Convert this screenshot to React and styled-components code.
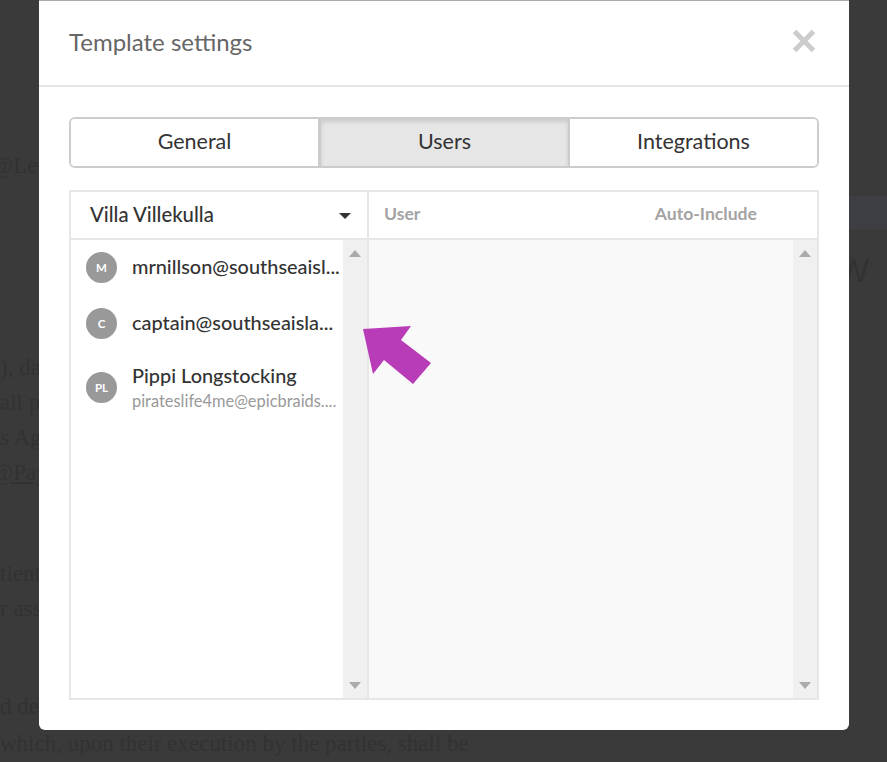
import React from "react";
import styled, { createGlobalStyle } from "styled-components";

const GlobalStyle = createGlobalStyle`
  html, body {
    margin: 0;
    padding: 0;
    height: 100%;
    overflow: hidden;
    background: #3a3a3a;
  }
  * {
    box-sizing: border-box;
  }
`;

const Page = styled.div`
  position: relative;
  width: 887px;
  height: 762px;
  overflow: hidden;
  background: #3a3a3a;
  font-family: "Lato", "Open Sans", sans-serif;
`;

const Document = styled.div`
  display: flex;
  flex-direction: column;
  height: 100%;
  font-family: "Liberation Serif", serif;
  font-size: 23px;
  line-height: 35px;
  color: #323232;
  white-space: nowrap;
`;

const DocLine = styled.div`
  height: 35px;
  margin-top: ${({ gap }) => gap || 0}px;
  margin-left: ${({ indent }) => indent || 0}px;
  text-decoration: ${({ link }) => (link ? "underline" : "none")};
`;

const Band = styled.div`
  position: absolute;
  left: 849px;
  right: 0;
  top: 196px;
  height: 33px;
  background: #3e3e45;
`;

const Heading = styled.div`
  position: absolute;
  left: 838px;
  top: 251px;
  font-family: "Liberation Sans", sans-serif;
  font-size: 33px;
  line-height: 40px;
  color: #323232;
`;

const Modal = styled.div`
  position: absolute;
  left: 39px;
  top: 0;
  width: 810px;
  height: 730px;
  display: flex;
  flex-direction: column;
  background: #fff;
  border-top: 1px solid #aaa;
  border-radius: 0 0 6px 6px;
`;

const ModalHeader = styled.div`
  height: 86px;
  flex: none;
  display: flex;
  align-items: center;
  justify-content: space-between;
  padding: 0 33px 4px 30px;
  border-bottom: 2px solid #e6e6e6;
`;

const Title = styled.h2`
  margin: 0;
  font-size: 24px;
  font-weight: 400;
  color: #666;
`;

const CloseIcon = styled.svg`
  width: 24px;
  height: 24px;
  display: block;
`;

const ModalBody = styled.div`
  flex: 1;
  display: flex;
  flex-direction: column;
  gap: 22px;
  padding: 30px 30px 30px;
`;

const Tabs = styled.div`
  display: flex;
  height: 51px;
  flex: none;
  border: 2px solid #ccc;
  border-radius: 6px;
  overflow: hidden;
`;

const Tab = styled.div`
  flex: 1;
  display: flex;
  align-items: center;
  justify-content: center;
  padding-bottom: 4px;
  font-size: 21.5px;
  color: #333;
  background: ${({ active }) => (active ? "#e6e6e6" : "#fff")};
  border-left: ${({ active }) => (active ? "3px solid #ccc" : "none")};
  border-right: ${({ active }) => (active ? "2px solid #ccc" : "none")};
  box-shadow: ${({ active }) => (active ? "inset 0 3px 4px rgba(0, 0, 0, 0.12)" : "none")};
`;

const Table = styled.div`
  flex: 1;
  display: grid;
  grid-template-columns: 298px 1fr;
  grid-template-rows: 48px 1fr;
  border: 2px solid #e6e6e6;
`;

const AccountCell = styled.div`
  display: flex;
  align-items: center;
  justify-content: space-between;
  padding: 0 16px 3px 19px;
  border-right: 2px solid #e6e6e6;
  border-bottom: 2px solid #e6e6e6;
  font-size: 20.3px;
  font-weight: 500;
  color: #333;
`;

const Caret = styled.span`
  width: 0;
  height: 0;
  margin-top: 5px;
  border-left: 6px solid transparent;
  border-right: 6px solid transparent;
  border-top: 6px solid #333;
`;

const ColumnHeads = styled.div`
  display: flex;
  align-items: center;
  justify-content: space-between;
  padding: 0 60px 3px 15px;
  border-bottom: 2px solid #e6e6e6;
  font-size: 17.6px;
  font-weight: 700;
  color: #a3a3a3;
`;

const UserPane = styled.div`
  display: flex;
  min-height: 0;
  border-right: 2px solid #e6e6e6;
  overflow: hidden;
`;

const UserList = styled.div`
  flex: 1;
  min-width: 0;
  display: flex;
  flex-direction: column;
  gap: 1px;
  padding-left: 15px;
`;

const UserRow = styled.div`
  display: flex;
  align-items: center;
  gap: 15px;
  min-height: ${({ tall }) => (tall ? 71 : 55)}px;
`;

const Avatar = styled.div`
  width: 31px;
  height: 31px;
  flex: none;
  display: flex;
  align-items: center;
  justify-content: center;
  border-radius: 50%;
  background: #999;
  color: #fff;
  font-size: 11.5px;
  font-weight: 700;
`;

const UserText = styled.div`
  flex: 1;
  min-width: 0;
  padding-bottom: ${({ tall }) => (tall ? 0 : 3)}px;
`;

const UserName = styled.div`
  font-size: 19.9px;
  line-height: 25px;
  font-weight: 500;
  color: #333;
  white-space: nowrap;
`;

const UserEmail = styled.div`
  font-size: 16.4px;
  line-height: 25px;
  color: #999;
  white-space: nowrap;
`;

const DetailPane = styled.div`
  display: flex;
  justify-content: flex-end;
  background: #f9f9f9;
  min-height: 0;
`;

const Scrollbar = styled.div`
  width: 24px;
  flex: none;
  display: flex;
  flex-direction: column;
  align-items: center;
  justify-content: space-between;
  padding: 10px 0 9px;
  background: #f0f0f0;
`;

const ArrowUp = styled.span`
  width: 0;
  height: 0;
  border-left: 6px solid transparent;
  border-right: 6px solid transparent;
  border-bottom: 7px solid #aaa;
`;

const ArrowDown = styled.span`
  width: 0;
  height: 0;
  border-left: 6px solid transparent;
  border-right: 6px solid transparent;
  border-top: 7px solid #aaa;
`;

const Pointer = styled.svg`
  position: absolute;
  left: 360px;
  top: 323px;
  width: 74px;
  height: 64px;
`;

const users = [
  { initials: "M", name: "mrnillson@southseaisl..." },
  { initials: "C", name: "captain@southseaisla..." },
  { initials: "PL", name: "Pippi Longstocking", email: "pirateslife4me@epicbraids...." },
];

const docLines = [
  { gap: 148, indent: -8, text: "@Levin" },
  { gap: 167, text: "), dated" },
  { text: "all parties" },
  { text: "s Agreement" },
  { indent: -8, text: "@PaymentTerms", link: true },
  { gap: 66, text: "tient" },
  { text: "r assign" },
  { gap: 63, text: "d delivered" },
  { gap: 2, text: "which, upon their execution by the parties, shall be" },
];

const Scroller = () => (
  <Scrollbar>
    <ArrowUp />
    <ArrowDown />
  </Scrollbar>
);

export default function App() {
  return (
    <Page>
      <GlobalStyle />
      <Document>
        {docLines.map((line) => (
          <DocLine key={line.text} gap={line.gap} indent={line.indent} link={line.link}>
            {line.text}
          </DocLine>
        ))}
      </Document>
      <Band />
      <Heading>W</Heading>
      <Modal>
        <ModalHeader>
          <Title>Template settings</Title>
          <CloseIcon viewBox="0 0 24 24">
            <path d="M2.5 2.5 L21.5 21.5 M21.5 2.5 L2.5 21.5" stroke="#ccc" strokeWidth="5" fill="none" />
          </CloseIcon>
        </ModalHeader>
        <ModalBody>
          <Tabs>
            <Tab>General</Tab>
            <Tab active>Users</Tab>
            <Tab>Integrations</Tab>
          </Tabs>
          <Table>
            <AccountCell>
              Villa Villekulla
              <Caret />
            </AccountCell>
            <ColumnHeads>
              <span>User</span>
              <span>Auto-Include</span>
            </ColumnHeads>
            <UserPane>
              <UserList>
                {users.map((user) => (
                  <UserRow key={user.initials} tall={!!user.email}>
                    <Avatar>{user.initials}</Avatar>
                    <UserText tall={!!user.email}>
                      <UserName>{user.name}</UserName>
                      {user.email && <UserEmail>{user.email}</UserEmail>}
                    </UserText>
                  </UserRow>
                ))}
              </UserList>
              <Scroller />
            </UserPane>
            <DetailPane>
              <Scroller />
            </DetailPane>
          </Table>
        </ModalBody>
      </Modal>
      <Pointer viewBox="0 0 74 64">
        <path d="M3 6 L51 3 L41 17 L71 40 L53 61 L24 37 L13 51 Z" fill="#b83bb8" />
      </Pointer>
    </Page>
  );
}
